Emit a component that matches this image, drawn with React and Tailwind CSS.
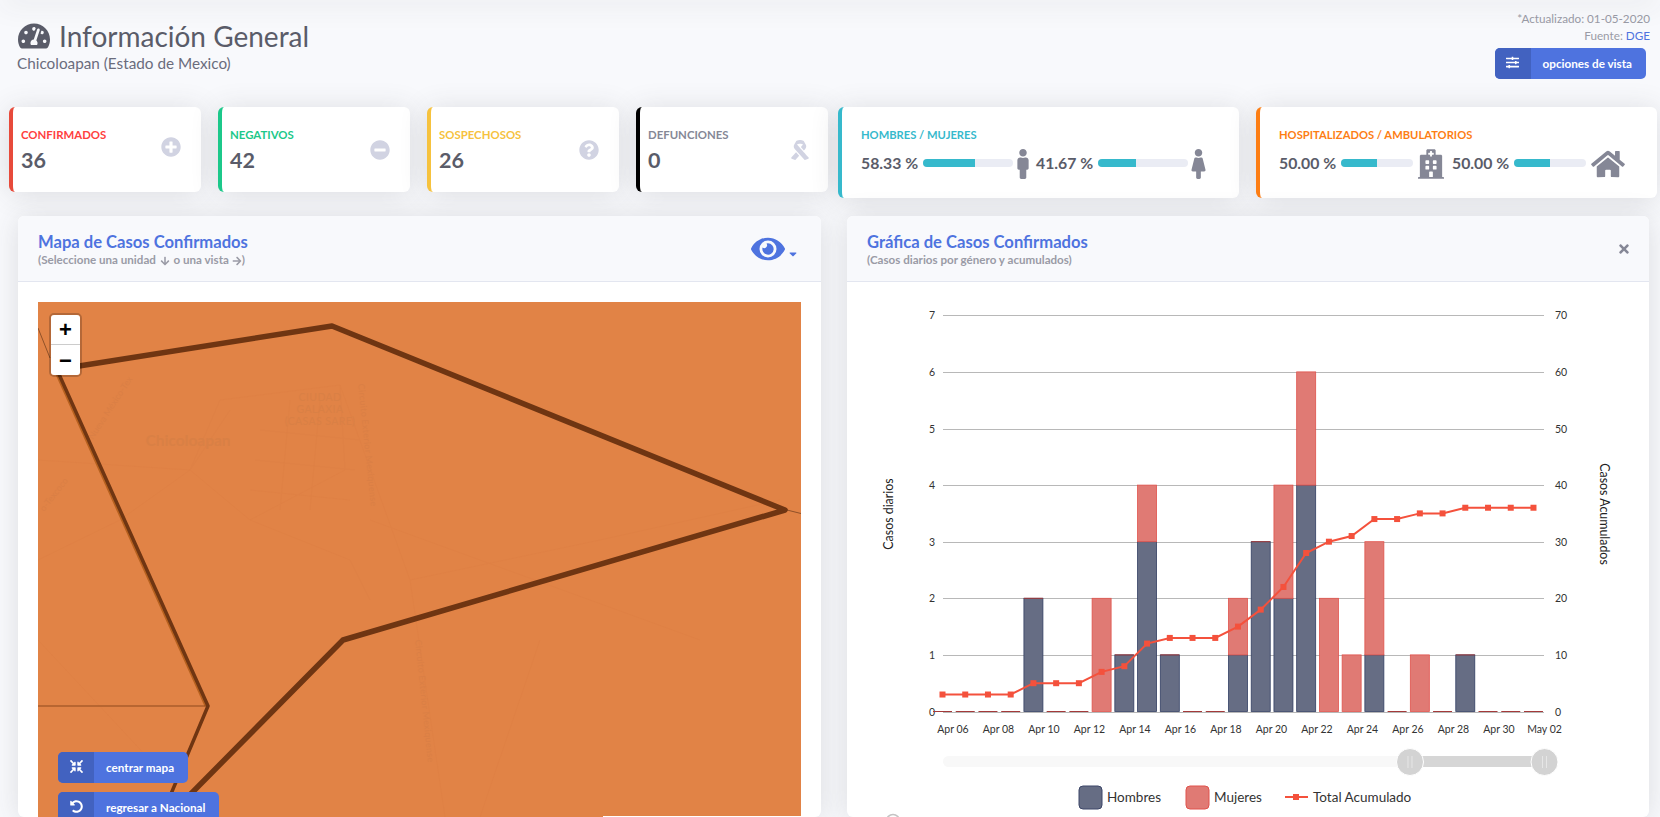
import React from 'react';
import {
  FaTachometerAlt, FaPlusCircle, FaMinusCircle, FaQuestionCircle, FaRibbon, FaMale, FaFemale,
  FaHospital, FaHome, FaSlidersH, FaCompressArrowsAlt, FaUndoAlt, FaEye, FaCaretDown, FaTimes,
  FaArrowDown, FaArrowRight,
} from 'react-icons/fa';

const hombres = [0, 0, 0, 0, 2, 0, 0, 0, 1, 3, 1, 0, 0, 1, 3, 2, 4, 0, 0, 1, 0, 0, 0, 1, 0, 0, 0];
const mujeres = [0, 0, 0, 0, 0, 0, 0, 2, 0, 1, 0, 0, 0, 1, 0, 2, 2, 2, 1, 2, 0, 1, 0, 0, 0, 0, 0];
const total = [3, 3, 3, 3, 5, 5, 5, 7, 8, 12, 13, 13, 13, 15, 18, 22, 28, 30, 31, 34, 34, 35, 35, 36, 36, 36, 36];
const dates = ['Apr 06', 'Apr 08', 'Apr 10', 'Apr 12', 'Apr 14', 'Apr 16', 'Apr 18', 'Apr 20', 'Apr 22', 'Apr 24', 'Apr 26', 'Apr 28', 'Apr 30', 'May 02'];

const px = (i) => 942.5 + i * 22.73;
const py = (v) => 711.5 - v * 56.6;

const SmallCard = ({ label, value, icon: Icon, border, color, iconClass }) => (
  <div className={`w-[192px] h-[85px] bg-white rounded-md border-l-4 ${border} shadow-[0_2px_28px_rgba(58,59,69,0.15)] pl-2 pr-5 flex items-center justify-between`}>
    <div className="pt-[2px]">
      <div className={`text-[11.4px] leading-4 font-bold uppercase ${color}`}>{label}</div>
      <div className="text-[21.5px] leading-7 mt-[3px] font-bold text-[#5a5c69]">{value}</div>
    </div>
    <Icon className={`text-[#d1d3e2] ${iconClass}`} />
  </div>
);

const Stat = ({ pct, barW, boxW, icon: Icon, iconClass }) => (
  <div className="flex items-center">
    <span className="w-[58px] text-[15.8px] font-bold text-[#5a5c69] whitespace-nowrap">{pct.toFixed(2)} %</span>
    <div className={`ml-1 h-2 rounded-full bg-[#eaecf4] overflow-hidden ${barW}`}>
      <div className="h-full bg-[#36b9cc]" style={{ width: `${pct}%` }} />
    </div>
    <div className={`flex justify-center ${boxW}`}>
      <Icon className={`text-[#858796] mt-[2px] ${iconClass}`} />
    </div>
  </div>
);

const WideCard = ({ label, border, color, children }) => (
  <div className={`w-[401px] h-[91px] bg-white rounded-md border-l-4 ${border} shadow-[0_2px_28px_rgba(58,59,69,0.15)] pl-[19px] pt-5`}>
    <div className={`text-[11.2px] leading-4 font-bold uppercase ${color}`}>{label}</div>
    <div className="flex gap-[3px] mt-[2px] h-[36px] items-center">{children}</div>
  </div>
);

const SplitButton = ({ icon: Icon, children }) => (
  <div className="inline-flex h-[31px] rounded-[5px] bg-[#4e73df] overflow-hidden text-white text-[11.7px] font-bold">
    <span className="w-9 bg-[#4262c0] flex items-start justify-center pt-2">
      <Icon className="text-[13px]" />
    </span>
    <span className="pl-3 pr-[14px] flex items-center whitespace-nowrap">{children}</span>
  </div>
);

const PanelHeader = ({ title, sub, children }) => (
  <div className="h-[66px] bg-[#f8f9fc] border-b border-[#e3e6f0] rounded-t-md pl-5 pr-6 flex items-center justify-between">
    <div className="pt-[2px]">
      <h2 className="text-[16.6px] leading-5 font-bold text-[#4e73df]">{title}</h2>
      <div className="text-[11.6px] leading-[15px] font-bold text-[#9a9ba6]">{sub}</div>
    </div>
    {children}
  </div>
);

const MapView = () => (
  <div className="relative h-[515px] overflow-hidden bg-[#e18346]">
    <svg viewBox="38 302 763 515" className="w-full h-full block">
      <g fill="none" stroke="#df8145" strokeWidth="1">
        <path d="M220 400 L340 385 L345 470 L250 520 L190 470 Z" />
        <path d="M250 520 L350 560 L370 600" />
        <path d="M340 385 L410 580 L445 817" />
        <path d="M38 460 L190 470" />
        <path d="M38 560 L120 520 L190 470 L230 410" />
        <path d="M370 520 L700 640" />
        <path d="M540 640 L480 817" />
        <path d="M38 640 L150 760" />
        <path d="M410 580 L600 540 L780 500" />
        <path d="M260 430 L360 440 M255 460 L355 470 M250 490 L350 500 M290 400 L280 510 M320 400 L310 510" />
      </g>
      <g fill="#d98045" fontFamily="Lato, sans-serif">
        <text x="188" y="446" fontSize="15.5" fontWeight="700" textAnchor="middle">Chicoloapan</text>
        <text x="320" y="401" fontSize="10.5" letterSpacing="0.4" textAnchor="middle">CIUDAD</text>
        <text x="320" y="413" fontSize="10.5" letterSpacing="0.4" textAnchor="middle">GALAXIA</text>
        <text x="320" y="425" fontSize="10.5" letterSpacing="0.4" textAnchor="middle">(CASAS SARE)</text>
        <g fill="#da7f45">
          <text fontSize="9" transform="translate(93 440) rotate(-57)">Nueva México-Tex</text>
          <text fontSize="9" transform="translate(44 512) rotate(-52)">o-Texcoco</text>
          <text fontSize="9" letterSpacing="0.3" transform="translate(358 384) rotate(84)">Circuito Exterior Mexiquense</text>
          <text fontSize="9" letterSpacing="0.3" transform="translate(415 640) rotate(84)">Circuito Exterior Mexiquense</text>
        </g>
      </g>
      <path d="M58 372 L208 706" fill="none" stroke="#b7611f" strokeWidth="3" transform="translate(-2 0)" />
      <path d="M38 328 L50 358 M783 509 L801 513.5" fill="none" stroke="#8f5128" strokeWidth="1" />
      <path d="M38 706 L208 706" fill="none" stroke="#8f4a1c" strokeWidth="1.2" />
      <path d="M58 372 L208 706 L160 820" fill="none" stroke="#6f3512" strokeWidth="3.5" strokeLinejoin="round" />
      <path d="M79 366 L332 326 L785 510 L343 640 L165 820" fill="none" stroke="#6f3512" strokeWidth="5.5" strokeLinejoin="round" />
    </svg>
    <div className="absolute left-[11px] top-[11px] w-[33px] rounded-[5px] border-2 border-black/20 bg-clip-padding">
      <div className="h-[30px] bg-white rounded-t-[3px] border-b border-[#cccccc] flex items-center justify-center text-[22px] font-bold text-black font-['Liberation_Sans',sans-serif]">+</div>
      <div className="h-[30px] bg-white rounded-b-[3px] flex items-center justify-center text-[22px] font-bold text-black font-['Liberation_Sans',sans-serif]">−</div>
    </div>
    <div className="absolute left-5 top-[450px] flex flex-col items-start gap-[9px]">
      <SplitButton icon={FaCompressArrowsAlt}>centrar mapa</SplitButton>
      <SplitButton icon={FaUndoAlt}>regresar a Nacional</SplitButton>
    </div>
    <div className="absolute right-0 bottom-0 w-[198px] h-px bg-white" />
  </div>
);

const Chart = () => (
  <svg viewBox="847 282 802 535" className="w-full h-[535px] block" fontFamily="Lato, sans-serif">
    {[0, 1, 2, 3, 4, 5, 6, 7].map((v) => (
      <g key={v}>
        <line x1="943" x2="1544" y1={Math.round(py(v)) + 0.5} y2={Math.round(py(v)) + 0.5} stroke="#b8b8b8" />
        <text x="935" y={py(v) + 4} fontSize="10.5" fill="#333" textAnchor="end">{v}</text>
        <text x="1555" y={py(v) + 4} fontSize="10.5" fill="#333">{v * 10}</text>
      </g>
    ))}
    {hombres.map((h, i) => {
      const m = mujeres[i];
      const x = px(i) - 9.5;
      return (
        <g key={i}>
          {h > 0 && <rect x={x} y={py(h)} width="19" height={h * 56.6} fill="#666d84" stroke="#333f63" strokeWidth="0.8" />}
          {m > 0 && <rect x={x} y={py(h + m)} width="19" height={m * 56.6} fill="#e07a74" stroke="#e0534c" strokeWidth="0.8" />}
          {m === 0 && <line x1={x} x2={x + 19} y1={py(h)} y2={py(h)} stroke="#a33a3a" />}
        </g>
      );
    })}
    <polyline points={total.map((v, i) => `${px(i)},${py(v / 10)}`).join(' ')} fill="none" stroke="#f4513c" strokeWidth="2" />
    {total.map((v, i) => (
      <rect key={i} x={px(i) - 3} y={py(v / 10) - 3} width="6" height="6" fill="#f4513c" />
    ))}
    {dates.map((d, i) => (
      <text key={d} x={953 + i * 45.5} y="732.5" fontSize="10.5" fill="#333" textAnchor="middle">{d}</text>
    ))}
    <text fontSize="12.4" fill="#222" textAnchor="middle" transform="translate(893 514) rotate(-90)">Casos diarios</text>
    <text fontSize="12.4" fill="#222" textAnchor="middle" transform="translate(1600 514) rotate(90)">Casos Acumulados</text>

    <rect x="943" y="756" width="470" height="11" rx="5.5" fill="#f8f8f8" />
    <rect x="1420" y="756" width="116" height="11" fill="#d6d6d6" />
    {[1410, 1544.5].map((x) => (
      <g key={x}>
        <circle cx={x} cy="762" r="13.5" fill="#d3d3d3" stroke="#ffffff" strokeWidth="1" />
        <path d={`M${x - 2} 756 V768 M${x + 2} 756 V768`} stroke="#e6e6e6" strokeWidth="1" />
      </g>
    ))}

    <rect x="1079" y="786" width="23" height="23" rx="4" fill="#666d84" stroke="#3c4668" />
    <text x="1107" y="802" fontSize="13.5" fill="#333">Hombres</text>
    <rect x="1186" y="786" width="23" height="23" rx="4" fill="#e07a74" stroke="#e0534c" />
    <text x="1214" y="802" fontSize="13.5" fill="#333">Mujeres</text>
    <line x1="1285" x2="1308" y1="797" y2="797" stroke="#f4513c" strokeWidth="2" />
    <rect x="1293" y="794" width="6" height="6" fill="#f4513c" />
    <text x="1313" y="802" fontSize="13.5" fill="#333">Total Acumulado</text>
    <circle cx="893" cy="821" r="6.5" fill="none" stroke="#c4c4c4" strokeWidth="1.5" />
  </svg>
);

export default function App() {
  return (
    <div className="relative h-screen overflow-hidden bg-[#f8f9fc] font-['Lato',sans-serif]">
      <div className="absolute inset-x-0 -top-2 h-2 shadow-[0_2px_28px_rgba(58,59,69,0.15)]" />

      <header className="h-[107px] pl-[17px] pr-[10px] flex justify-between">
        <div className="pt-[18px]">
          <h1 className="flex items-center text-[28px] leading-9 text-[#5a5c69]">
            <FaTachometerAlt className="text-[32px] mr-[9px] ml-px" />
            Información General
          </h1>
          <div className="text-[15.3px] leading-5 text-[#6a6c7c] -mt-[1px]">Chicoloapan (Estado de Mexico)</div>
        </div>
        <div className="pt-[10px] flex flex-col items-end">
          <div className="text-[11.7px] leading-[17px] text-[#9a9ba6]">*Actualizado: 01-05-2020</div>
          <div className="text-[11.7px] leading-[17px] text-[#9a9ba6]">Fuente: <span className="text-[#4e73df]">DGE</span></div>
          <div className="mt-1 mr-1">
            <SplitButton icon={FaSlidersH}>opciones de vista</SplitButton>
          </div>
        </div>
      </header>

      <section className="flex items-start pl-[9px] gap-[17px]">
        <SmallCard label="Confirmados" value="36" icon={FaPlusCircle} border="border-[#e74a3b]" color="text-[#ff4040]" iconClass="text-[20px] -mt-[5px]" />
        <SmallCard label="Negativos" value="42" icon={FaMinusCircle} border="border-[#1cc88a]" color="text-[#1cc88a]" iconClass="text-[20px]" />
        <SmallCard label="Sospechosos" value="26" icon={FaQuestionCircle} border="border-[#f6c23e]" color="text-[#f6c23e]" iconClass="text-[20px]" />
        <SmallCard label="Defunciones" value="0" icon={FaRibbon} border="border-black" color="text-[#858796]" iconClass="text-[20px] -mr-[2px]" />
        <div className="flex gap-[17px] -ml-[7px]">
          <WideCard label="Hombres / Mujeres" border="border-[#36b9cc]" color="text-[#36b9cc]">
            <Stat pct={58.33} barW="w-[90px]" boxW="w-5" icon={FaMale} iconClass="h-[30px] w-[12px]" />
            <Stat pct={41.67} barW="w-[90px]" boxW="w-5" icon={FaFemale} iconClass="h-[30px] w-[15px]" />
          </WideCard>
          <WideCard label="Hospitalizados / Ambulatorios" border="border-[#fd7e14]" color="text-[#fd7e14]">
            <Stat pct={50} barW="w-[72px]" boxW="w-9" icon={FaHospital} iconClass="h-[30px] w-[26px]" />
            <Stat pct={50} barW="w-[72px]" boxW="w-11" icon={FaHome} iconClass="h-[30px] w-[34px]" />
          </WideCard>
        </div>
      </section>

      <section className="flex items-start pl-[18px] gap-[26px] mt-[18px] relative">
        <div className="w-[803px] bg-white rounded-md shadow-[0_2px_28px_rgba(58,59,69,0.15)]">
          <PanelHeader
            title="Mapa de Casos Confirmados"
            sub={<>(Seleccione una unidad <FaArrowDown className="inline text-[10px] mx-px" /> o una vista <FaArrowRight className="inline text-[10px]" />)</>}
          >
            <div className="flex items-end text-[#4e73df] mr-[-2px]">
              <FaEye className="text-[34px]" />
              <FaCaretDown className="text-[12px] ml-[2px] mb-[6px]" />
            </div>
          </PanelHeader>
          <div className="px-5 pt-5">
            <MapView />
          </div>
        </div>

        <div className="w-[802px] bg-white rounded-md shadow-[0_2px_28px_rgba(58,59,69,0.15)]">
          <PanelHeader title="Gráfica de Casos Confirmados" sub="(Casos diarios por género y acumulados)">
            <FaTimes className="text-[14px] text-[#858796] mr-[-6px]" />
          </PanelHeader>
          <Chart />
        </div>
      </section>
    </div>
  );
}
